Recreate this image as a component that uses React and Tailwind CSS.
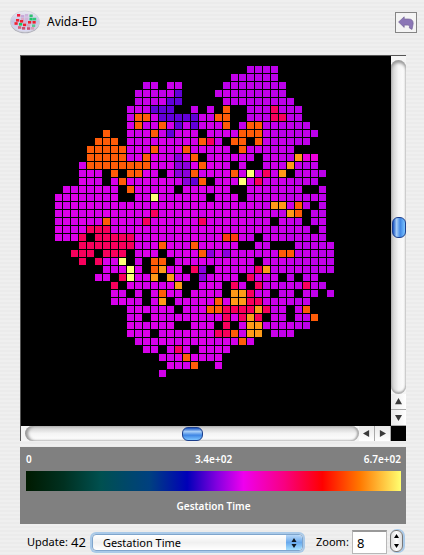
import { useState } from 'react';

const COLORS = {
  b: '#6200d8',
  v: '#8c00dc',
  r: '#f8005c',
  R: '#ff3c10',
  o: '#ff5c08',
  a: '#ff9a18',
  y: '#ffff78',
  k: '#ee00dc',
};

// One string per grid row, one letter per cell; a dot is an empty cell.
const ROWS = [
  '........................pppp',
  '......................pppppp',
  '...........pp.pp.....pppppppp',
  '..........pppppb....ppppppppp',
  '..........ppppbb.....ppppppppp',
  '.........pppbbb..p.p.o..ppprppp',
  '.........poopbbbbbppoo..ppprrpp',
  '.........poppopbpbpppo.poopppppp',
  '......o..pppopbppp.ppppoooppppppp',
  '.....ooo.ppppppppporp.oo.opppppp',
  '....ooooopppopppoppppp.opppppp',
  '....oooooppopppvpo.pppppp.ppppakk',
  '...poooooooopppvvpoppp.p..pppappp',
  '...ppp.o.oopp.pvvoppppopyprpa.pppp',
  '...ppp.popppppppvbo.pppyprppppppp',
  '.ppppppp.oppppp.pppppp..ppppppp..p',
  'pppppppp..ppypppppp.ppp.pppppppppp',
  'pppppppppppppppppppppppppppaapop.p',
  'pppppppppppprppppppppppppppppao.pp',
  'ppppppopppprpppppprpppppppp.ppp.pp',
  'pppprrrppppppppppppppppppppppppp.p',
  'pppr.rrrrrpppppppppppRRpp.pppppppp',
  '...rrrrrrrpppopppoppppp..pp...ppppp',
  '..rrr.rrr.ppp.ppppovpvppppppooppppp',
  '...r.rppy.p.oo.pppppppppp.ppppppppp',
  '......pppyp.oapp.rv.pppppra'.padEnd(35, 'p'),
  '.....pp.ryppa.app.vpppp.rppp.p.pp',
  '.......r.ppppppa..ppp.rp.rppppprpp',
  '.......pp.p.popp.pppp.aarpp.pp.pp.p',
  '.......pppp.pa.pppppopaarrpppppp',
  '.........pppppp.pppoorrrrarpp.po',
  '.........pp.ppppppppprprar.pp.ppo',
  '.........pppppp..ppp.r.paapppppp',
  '.........ppp.ppppppprropaa.ppp',
  '..........pppppppppppppop',
  '...........pp.prp.pppp',
  '.............pppopppp',
  '..............pppo..p',
  '.............p',
];

function cellColor(code, col, row) {
  if (code !== 'p') return COLORS[code];
  const edge = Math.max(0, col - 20) + Math.max(0, 12 - row);
  const wobble = ((col * 7 + row * 11) % 5) * 3;
  return `rgb(${Math.max(188, 222 - edge * 2 - wobble)} 0 234)`;
}

function Population() {
  return (
    <svg width="370" height="370" viewBox="0 0 370 370" shapeRendering="crispEdges" role="img" aria-label="Population grid">
      {ROWS.map((line, row) =>
        line.split('').map((code, col) =>
          code === '.' ? null : (
            <rect key={`${row}-${col}`} x={34 + col * 8} y={10 + row * 8} width="7" height="7" fill={cellColor(code, col, row)} />
          ),
        ),
      )}
    </svg>
  );
}

function Arrow({ d }) {
  return (
    <svg width="7" height="7" viewBox="0 0 8 8" aria-hidden="true">
      <path d={d} fill="#3a3a3a" />
    </svg>
  );
}
const UP = 'M4 0 8 7H0Z';
const DOWN = 'M0 1H8L4 8Z';
const LEFT = 'M0 4 7 0V8Z';
const RIGHT = 'M8 4 1 0V8Z';

const DISH = [
  [7, 4, '#f02040'], [11, 5, '#c8a8d8'], [15, 4, '#d0b4dc'], [15, 7.5, '#d0b4dc'], [11, 8, '#dca8c4'],
  [19.5, 4.5, '#30c070'], [19.5, 7.8, '#20c468'], [23, 7.8, '#30c878'],
  [6, 9, '#f02030'], [10, 10, '#f02030'], [14, 10.5, '#d8b0d0'], [18, 11, '#f02030'], [22.5, 11, '#f02030'],
  [4.5, 12.2, '#f02030'], [9, 13, '#20c468'], [13, 13.6, '#f02030'], [17, 14.2, '#d0a8c0'], [22, 14.4, '#60c890'],
  [8, 16.2, '#d86078'], [12, 17, '#cc5070'], [17, 17.2, '#cc5070'], [21, 17, '#d8a0b8'],
];

function Dish() {
  return (
    <svg width="30" height="24" viewBox="0 0 30 24" aria-hidden="true">
      <defs>
        <linearGradient id="dish" x1="0" y1="0" x2="0" y2="1">
          <stop offset="0" stopColor="#ececf2" />
          <stop offset=".5" stopColor="#c4c4e2" />
          <stop offset="1" stopColor="#dcdcf4" />
        </linearGradient>
      </defs>
      <ellipse cx="15" cy="12.8" rx="14.5" ry="10.5" fill="#b0b0ba" />
      <ellipse cx="15" cy="11.5" rx="14.5" ry="10.5" fill="url(#dish)" stroke="#d0d0d8" strokeWidth=".8" />
      {DISH.map(([x, y, fill]) => (
        <rect key={`${x}-${y}`} x={x} y={y} width="3.2" height="2.6" fill={fill} />
      ))}
    </svg>
  );
}

const THUMB =
  '[&::-webkit-slider-thumb]:appearance-none [&::-webkit-slider-thumb]:rounded-md [&::-webkit-slider-thumb]:border [&::-webkit-slider-thumb]:border-[#1c3f8c]';

export default function App() {
  const [zoom, setZoom] = useState(8);
  return (
    <main className="min-h-screen overflow-hidden bg-[repeating-linear-gradient(to_bottom,#efefef_0px,#efefef_2px,#ebebeb_2px,#ebebeb_4px)] font-['Noto_Sans','Open_Sans',sans-serif] text-[11px] leading-4 text-black">
      <header className="flex h-[55px] items-start justify-between pt-2 pr-[7px] pl-[10px]">
        <div className="flex h-7 items-center gap-[7px]">
          <Dish />
          <h1 className="text-[12px]">Avida-ED</h1>
        </div>
        <button type="button" aria-label="Flip back" className="mt-1 flex h-[21px] w-[22px] items-center justify-center border border-[#858585] bg-[#f4f4f4]">
          <svg width="16" height="14" viewBox="0 0 16 14" aria-hidden="true">
            <path d="M.6 6 6.2 .8V3H10.5C13.8 3 15.2 4.6 15.2 7.6L14 13.4 11.4 12V10.4C11.2 9.4 10.4 9.1 9 9.1H6.2V11.4Z" fill="#8b76b6" stroke="#75669a" strokeWidth=".7" />
          </svg>
        </button>
      </header>

      <section className="mr-[18px] ml-5 grid grid-cols-[1fr_15px] border-t border-l border-[#555]">
        <div className="flex h-[370px] justify-center overflow-hidden bg-black">
          <Population />
        </div>
        <div className="flex h-[370px] flex-col bg-[#f5f5f5] pt-1">
          <input
            type="range"
            aria-label="Scroll vertically"
            defaultValue="50"
            className={`${THUMB} w-[15px] flex-1 appearance-none rounded-full bg-linear-to-r from-[#c9c9c9] via-[#f4f4f4] to-white shadow-[inset_0_3px_3px_#999,inset_0_-2px_2px_#aaa] [writing-mode:vertical-lr] [&::-webkit-slider-thumb]:h-[21px] [&::-webkit-slider-thumb]:w-[14px] [&::-webkit-slider-thumb]:bg-[linear-gradient(to_right,#1450c0,#a8cff8_30%,#3f86e4_60%,#7cc4ff)]`}
          />
          <button type="button" aria-label="Scroll up" className="flex h-4 items-center justify-center border-b border-[#aaa] bg-linear-to-r from-[#e9e9e9] to-white">
            <Arrow d={UP} />
          </button>
          <button type="button" aria-label="Scroll down" className="flex h-4 items-center justify-center border-b border-[#aaa] bg-linear-to-r from-[#e9e9e9] to-white">
            <Arrow d={DOWN} />
          </button>
        </div>
        <div className="flex h-[15px] bg-[#f5f5f5] pl-1">
          <input
            type="range"
            aria-label="Scroll horizontally"
            defaultValue="50"
            className={`${THUMB} h-[15px] min-w-0 flex-1 appearance-none rounded-full bg-linear-to-b from-[#c9c9c9] via-[#f4f4f4] to-white shadow-[inset_3px_0_3px_#999,inset_-2px_0_2px_#aaa] [&::-webkit-slider-thumb]:h-[14px] [&::-webkit-slider-thumb]:w-[21px] [&::-webkit-slider-thumb]:bg-[linear-gradient(to_bottom,#1450c0,#a8cff8_30%,#3f86e4_60%,#7cc4ff)]`}
          />
          <button type="button" aria-label="Scroll left" className="flex w-4 items-center justify-center border-r border-[#aaa] bg-linear-to-b from-[#e9e9e9] to-white">
            <Arrow d={LEFT} />
          </button>
          <button type="button" aria-label="Scroll right" className="flex w-4 items-center justify-center border-r border-[#aaa] bg-linear-to-b from-[#e9e9e9] to-white">
            <Arrow d={RIGHT} />
          </button>
        </div>
        <div className="bg-black" />
      </section>

      <section className="mt-[6px] mr-[18px] ml-5 h-[77px] bg-[#808080] pt-1 pr-[5px] pl-[6px] text-[10px] font-semibold text-white">
        <div className="grid grid-cols-3">
          <span>0</span>
          <span className="text-center">3.4e+02</span>
          <span className="text-right">6.7e+02</span>
        </div>
        <div className="mt-1 h-5 bg-[linear-gradient(to_right,#001a00,#003020_10%,#005050_20%,#004080_33%,#0000b8_43%,#8400e0_51%,#ee00ee_58%,#f80080_69%,#ff0000_79%,#ff7800_89%,#ffff70)]" />
        <p className="mt-[7px] text-center">Gestation Time</p>
      </section>

      <form className="flex items-start pt-[6px] pr-[21px] pl-[27px]" onSubmit={(e) => e.preventDefault()}>
        <span className="mt-1 w-11">Update:</span>
        <output className="mt-1 text-[13px]">42</output>
        <div className="relative mt-1 ml-[6px] h-[17px] min-w-0 flex-1">
          <select aria-label="Display mode" className="h-[17px] w-full appearance-none rounded-sm border border-[#7fa5cc] bg-linear-to-b from-white via-[#f0f0f0] to-white pl-[10px] text-[11px] leading-[15px] shadow-[0_0_0_2px_#a9c9e8]">
            <option>Gestation Time</option>
            <option>Fitness</option>
          </select>
          <span className="pointer-events-none absolute top-px right-px flex h-[15px] w-4 items-center justify-center rounded-r-sm bg-linear-to-b from-[#b8d8f8] via-[#69a9ec] to-[#a4e0ff]">
            <svg width="6" height="10" viewBox="0 0 6 10" aria-hidden="true">
              <path d="M3 0 5.5 4H.5ZM3 10 .5 6H5.5Z" fill="#101820" />
            </svg>
          </span>
        </div>
        <label htmlFor="zoom" className="mt-1 ml-[13px] w-9">Zoom:</label>
        <input id="zoom" value={zoom} onChange={(e) => setZoom(Number(e.target.value) || 0)} className="h-6 w-[35px] border border-t-2 border-[#b8b8b8] border-t-[#999] bg-white pl-1 text-[13px]" />
        <div className="ml-[3px] flex h-[22px] w-[13px] flex-col rounded-md border border-[#777] bg-linear-to-r from-[#ddd] via-white to-[#ddd] shadow-[1px_0_0_1px_#a9c9e8]">
          <button type="button" aria-label="Zoom in" onClick={() => setZoom(zoom + 1)} className="flex flex-1 items-center justify-center">
            <svg width="5" height="4" viewBox="0 0 5 4" aria-hidden="true"><path d="M2.5 0 5 4H0Z" /></svg>
          </button>
          <button type="button" aria-label="Zoom out" onClick={() => setZoom(zoom - 1)} className="flex flex-1 items-center justify-center">
            <svg width="5" height="4" viewBox="0 0 5 4" aria-hidden="true"><path d="M2.5 4 5 0H0Z" /></svg>
          </button>
        </div>
      </form>
    </main>
  );
}
